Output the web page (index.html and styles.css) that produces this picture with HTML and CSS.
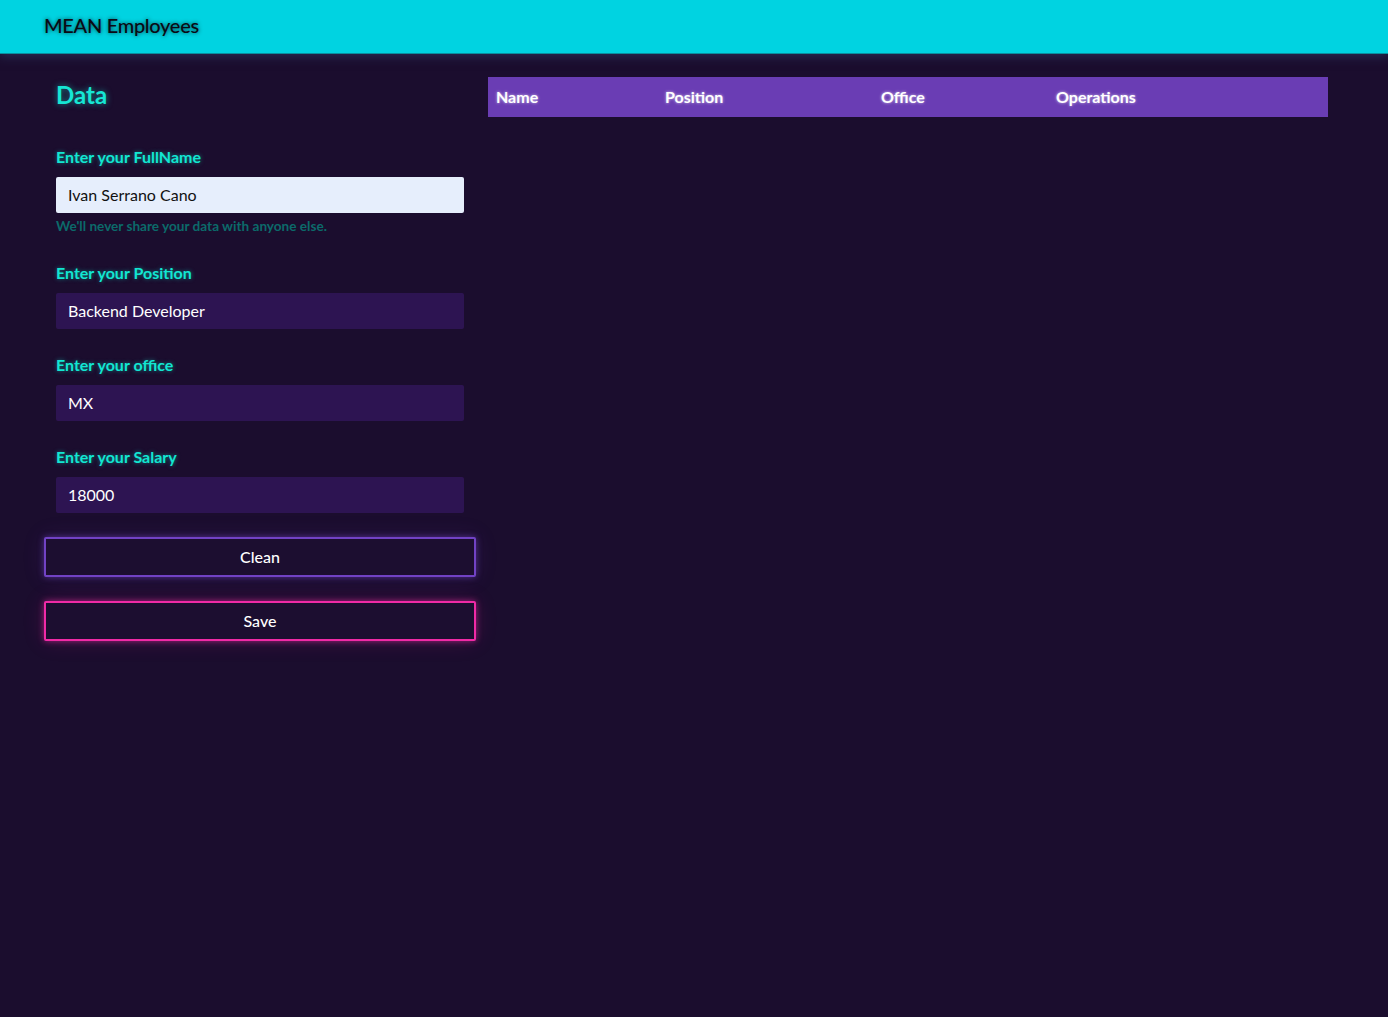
FILE: index.html
```html
<!DOCTYPE html>
<html lang="en">
<head>
<meta charset="utf-8">
<title>MEAN Employees</title>
<link rel="stylesheet" href="styles.css">
</head>
<body>
<nav class="navbar">
  <span class="brand">MEAN Employees</span>
</nav>
<main class="page">
  <section class="form-col">
    <h2 class="title">Data</h2>
    <form class="form">
      <div class="field">
        <label class="label">Enter your FullName</label>
        <input class="input input-filled" type="text" value="Ivan Serrano Cano">
        <small class="help">We'll never share your data with anyone else.</small>
      </div>
      <div class="field">
        <label class="label">Enter your Position</label>
        <input class="input" type="text" value="Backend Developer">
      </div>
      <div class="field">
        <label class="label">Enter your office</label>
        <input class="input" type="text" value="MX">
      </div>
      <div class="field">
        <label class="label">Enter your Salary</label>
        <input class="input" type="text" value="18000">
      </div>
      <button type="button" class="btn btn-clean">Clean</button>
      <button type="button" class="btn btn-save">Save</button>
    </form>
  </section>
  <section class="table-col">
    <table class="table">
      <thead>
        <tr>
          <th class="c-name">Name</th>
          <th class="c-pos">Position</th>
          <th class="c-off">Office</th>
          <th class="c-ops">Operations</th>
        </tr>
      </thead>
      <tbody></tbody>
    </table>
  </section>
</main>
</body>
</html>
```
FILE: styles.css
```css
* { box-sizing: border-box; }
html, body {
  margin: 0;
  padding: 0;
  background: #1b0d2e;
  min-height: 100%;
  font-family: Lato, "Noto Sans", sans-serif;
}
body { min-height: 1017px; }

.navbar {
  height: 54px;
  background: #00d3e1;
  border-bottom: 1px solid #0a8f9e;
  box-shadow: 0 2px 10px rgba(40, 50, 90, 0.9);
  display: flex;
  align-items: center;
  padding-left: 44px;
  padding-bottom: 4px;
  position: relative;
}
.brand {
  font-size: 20px;
  font-weight: 500;
  color: #0a0a14;
  letter-spacing: -0.3px;
  text-shadow: 0 0 4px rgba(0, 0, 0, 0.7);
}

.page {
  display: flex;
  align-items: flex-start;
  padding: 23px 0 0 44px;
  gap: 12px;
}

.form-col {
  width: 432px;
}
.title {
  margin: 0;
  padding: 3px 12px 0;
  height: 70px;
  font-size: 24px;
  font-weight: 700;
  color: #16e6d4;
  text-shadow: 0 0 6px rgba(22, 230, 212, 0.55);
}
.form {
  display: flex;
  flex-direction: column;
}
.field {
  display: flex;
  flex-direction: column;
  padding: 0 12px;
  margin-bottom: 26px;
}
.field:last-of-type { margin-bottom: 0; }
.label {
  font-size: 16px;
  font-weight: 700;
  color: #12e6d2;
  text-shadow: 0 0 4px rgba(18, 230, 210, 0.5);
  line-height: 20px;
  margin-bottom: 10px;
}
.input {
  height: 36px;
  border: none;
  border-radius: 2px;
  background: #2d1452;
  color: #ffffff;
  font-family: Lato, "Noto Sans", sans-serif;
  font-size: 16px;
  padding: 0 12px 2px;
  outline: none;
}
.input-filled {
  background: #e6eefc;
  color: #111111;
}
.help {
  margin-top: 5px;
  font-size: 13.6px;
  font-weight: 700;
  color: #0b6a6a;
  line-height: 16px;
  margin-bottom: 3px;
}
.btn {
  height: 40px;
  width: 432px;
  background: #1c0e30;
  color: #ffffff;
  font-family: Lato, "Noto Sans", sans-serif;
  font-size: 16px;
  font-weight: 500;
  border-radius: 2px;
  padding: 0 0 2px;
  cursor: pointer;
}
.btn-clean {
  margin-top: 24px;
  border: 2px solid #7142c4;
  box-shadow: 0 0 6px rgba(113, 66, 196, 0.6), 0 0 22px rgba(113, 66, 196, 0.15);
}
.btn-save {
  margin-top: 24px;
  border: 2px solid #f02aa6;
  box-shadow: 0 0 6px rgba(240, 42, 166, 0.6), 0 0 22px rgba(240, 42, 166, 0.15);
}

.table-col {
  width: 840px;
}
.table {
  width: 840px;
  border-collapse: collapse;
}
.table thead tr {
  background: #6a3db4;
}
.table th {
  height: 40px;
  text-align: left;
  padding: 0 8px 2px;
  color: #ffffff;
  font-size: 16px;
  font-weight: 700;
  text-shadow: 0 0 3px rgba(255, 255, 255, 0.7);
}
.c-name { width: 169px; }
.c-pos { width: 216px; }
.c-off { width: 175px; }
.c-ops { width: 280px; }
```
